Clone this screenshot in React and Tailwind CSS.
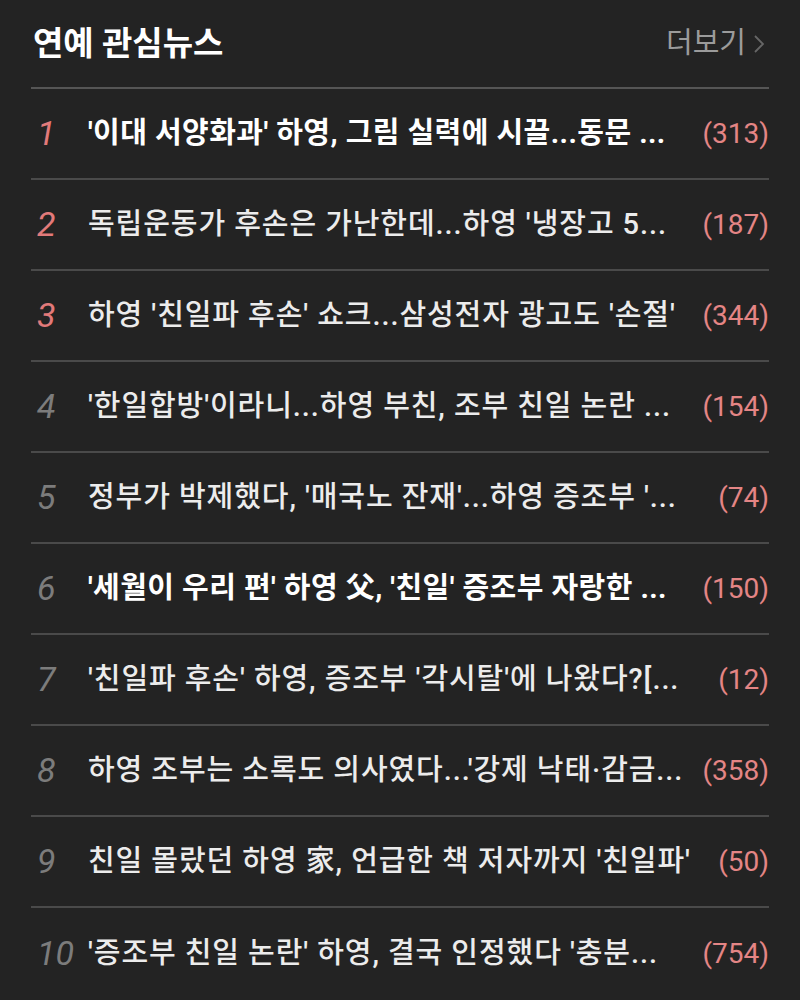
import React from 'react';

const news = [
  { rank: 1, title: "'이대 서양화과' 하영, 그림 실력에 시끌...동문 ...", count: 313, bold: true },
  { rank: 2, title: "독립운동가 후손은 가난한데...하영 '냉장고 5...", count: 187 },
  { rank: 3, title: "하영 '친일파 후손' 쇼크...삼성전자 광고도 '손절'", count: 344 },
  { rank: 4, title: "'한일합방'이라니...하영 부친, 조부 친일 논란 ...", count: 154 },
  { rank: 5, title: "정부가 박제했다, '매국노 잔재'...하영 증조부 '...", count: 74 },
  { rank: 6, title: "'세월이 우리 편' 하영 父, '친일' 증조부 자랑한 ...", count: 150, bold: true },
  { rank: 7, title: "'친일파 후손' 하영, 증조부 '각시탈'에 나왔다?[...", count: 12 },
  { rank: 8, title: "하영 조부는 소록도 의사였다...'강제 낙태·감금...", count: 358 },
  { rank: 9, title: "친일 몰랐던 하영 家, 언급한 책 저자까지 '친일파'", count: 50 },
  { rank: 10, title: "'증조부 친일 논란' 하영, 결국 인정했다 '충분...", count: 754 },
];

const font = { fontFamily: "Roboto, 'Noto Sans CJK KR', sans-serif" };

const App = () => {
  return (
    <div className="min-h-screen bg-[#232323] px-[31px]" style={font}>
      {/* Header */}
      <div className="flex items-center justify-between h-[89px] border-b-2 border-[#555555]">
        <h2 className="text-[33px] font-bold text-white pl-[2px]">연예 관심뉴스</h2>
        <div className="flex items-center gap-[7px] pr-[4px] text-[#9b9b9b] text-[29px]">
          <span>더보기</span>
          <svg className="w-[12px] h-[20px] text-[#666666]" viewBox="0 0 12 20" fill="none" stroke="currentColor" strokeWidth={1.8}>
            <path d="M2 2l8 8-8 8" />
          </svg>
        </div>
      </div>

      {/* List */}
      <ul>
        {news.map((item) => (
          <li
            key={item.rank}
            className={`flex items-center h-[91px] ${item.rank < 10 ? 'border-b-2 border-[#4a4a4a]' : ''}`}
          >
            <span
              className={`w-[57px] shrink-0 pl-[6px] italic text-[34px] ${item.rank <= 3 ? 'text-[#e27a7a]' : 'text-[#7c7c7c]'}`}
            >
              {item.rank}
            </span>
            <span
              className={`min-w-0 truncate text-[29px] ${item.bold ? 'font-bold tracking-[0.015em] text-white' : 'font-medium tracking-[0.032em] text-[#ececec]'}`}
            >
              {item.title}
            </span>
            <span className="ml-auto pl-[14px] shrink-0 text-[28px] text-[#e48585]">({item.count})</span>
          </li>
        ))}
      </ul>
    </div>
  );
};

export default App;
